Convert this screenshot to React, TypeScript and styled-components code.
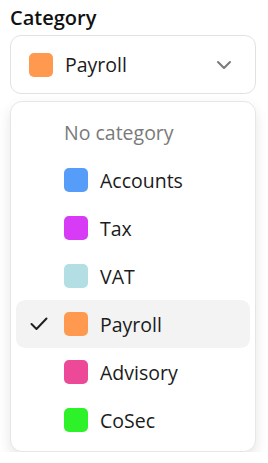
import { useState } from "react";
import styled, { createGlobalStyle } from "styled-components";

const categories = [
	{ name: "Accounts", color: "#569dfa" },
	{ name: "Tax", color: "#d73bf5" },
	{ name: "VAT", color: "#b2dee4" },
	{ name: "Payroll", color: "#ff994f" },
	{ name: "Advisory", color: "#ec4a98" },
	{ name: "CoSec", color: "#2ef229" },
];

const GlobalStyle = createGlobalStyle`
	body {
		margin: 0;
		background: #ffffff;
		font-family: "Open Sans", "Noto Sans", sans-serif;
		color: #1b1b1b;
	}
`;

const App = () => {
	const [selected, setSelected] = useState("Payroll");
	const current = categories.find((c) => c.name === selected);

	return (
		<>
			<GlobalStyle />
			<Field>
				<Label>Category</Label>
				<Trigger type="button">
					{current && <Swatch $color={current.color} />}
					<TriggerText>{current ? current.name : "No category"}</TriggerText>
					<Chevron width="16" height="10" viewBox="0 0 16 10">
						<polyline points="2,2 8,8 14,2" />
					</Chevron>
				</Trigger>
				<Menu>
					<Item onClick={() => setSelected("")}>
						<CheckSlot />
						<Muted>No category</Muted>
					</Item>
					{categories.map((c) => (
						<Item
							key={c.name}
							$active={c.name === selected}
							onClick={() => setSelected(c.name)}
						>
							<CheckSlot>
								{c.name === selected && (
									<svg width="18" height="14" viewBox="0 0 18 14">
										<polyline points="1.5,7 6.5,12 16.5,1.5" />
									</svg>
								)}
							</CheckSlot>
							<Swatch $color={c.color} />
							<ItemText>{c.name}</ItemText>
						</Item>
					))}
				</Menu>
			</Field>
		</>
	);
};

const Field = styled.div`
	width: 246px;
	padding: 4px 10px 0;
	display: flex;
	flex-direction: column;
`;

const Label = styled.div`
	font-size: 20px;
	font-weight: 600;
	line-height: 28px;
	color: #111;
`;

const Trigger = styled.button`
	margin-top: 3px;
	height: 59px;
	display: flex;
	align-items: center;
	gap: 12px;
	padding: 0 23px 0 18px;
	background: #fff;
	border: 1px solid #e2e2e2;
	border-radius: 11px;
	font-family: inherit;
	cursor: pointer;
`;

const TriggerText = styled.span`
	flex: 1;
	text-align: left;
	font-size: 19.5px;
	color: #1b1b1b;
`;

const Chevron = styled.svg`
	fill: none;
	stroke: #7a7a7a;
	stroke-width: 2;
	stroke-linecap: round;
	stroke-linejoin: round;
`;

const Swatch = styled.span<{ $color: string }>`
	width: 24px;
	height: 24px;
	flex-shrink: 0;
	border-radius: 5px;
	background: ${(p) => p.$color};
`;

const Menu = styled.div`
	margin-top: 7px;
	padding: 6px 5px 7px;
	border: 1px solid #e6e6e6;
	border-radius: 12px;
	background: #fff;
	box-shadow: 0 6px 14px rgba(0, 0, 0, 0.1);
	display: flex;
	flex-direction: column;
`;

const Item = styled.div<{ $active?: boolean }>`
	height: 48px;
	display: flex;
	align-items: center;
	padding-left: 14px;
	border-radius: 9px;
	background: ${(p) => (p.$active ? "#f3f3f3" : "transparent")};
	cursor: pointer;
`;

const CheckSlot = styled.span`
	width: 18px;
	height: 14px;
	margin-right: 16px;
	display: flex;

	svg {
		fill: none;
		stroke: #1f1f1f;
		stroke-width: 2;
		stroke-linecap: round;
		stroke-linejoin: round;
	}
`;

const ItemText = styled.span`
	margin-left: 12px;
	font-size: 19.5px;
	color: #1b1b1b;
`;

const Muted = styled.span`
	font-size: 19.5px;
	color: #7a7a7a;
`;

export default App;
